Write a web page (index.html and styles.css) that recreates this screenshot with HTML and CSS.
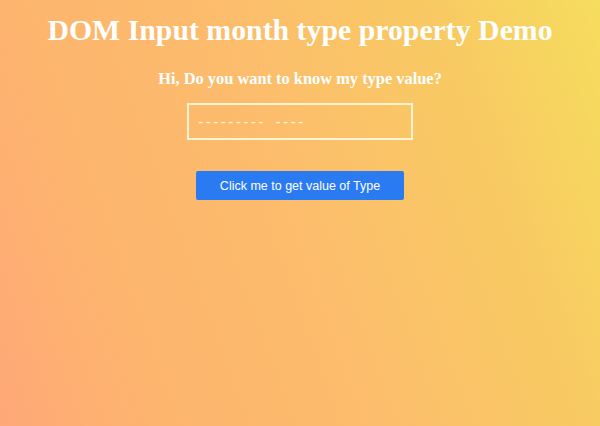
FILE: index.html
```html
<!DOCTYPE html>
<html>
<head>
<meta charset="utf-8">
<link rel="stylesheet" href="styles.css">
</head>
<body>
<main class="page">
  <h1 class="title">DOM Input month type property Demo</h1>
  <h3 class="subtitle">Hi, Do you want to know my type value?</h3>
  <input class="month" type="text" placeholder="--------- ----">
  <button class="btn" type="button">Click me to get value of Type</button>
</main>
</body>
</html>
```
FILE: styles.css
```css
html, body {
  margin: 0;
  height: 100%;
}
body {
  background: linear-gradient(70deg, #ffa878 0%, #fdb46e 20.5%, #fcbd6c 50%, #f8cb62 79.5%, #f6dd5e 100%);
  font-family: "Liberation Serif", "Times New Roman", serif;
  color: #fff;
}
.page {
  display: flex;
  flex-direction: column;
  align-items: center;
  padding-top: 13px;
}
.title {
  margin: 0;
  font-size: 29.8px;
  font-weight: bold;
  line-height: 34px;
}
.subtitle {
  margin: 22px 0 0;
  font-size: 16.4px;
  line-height: 19px;
}
.month {
  margin-top: 15px;
  box-sizing: border-box;
  width: 226px;
  height: 37px;
  background: transparent;
  border: 2px solid #fff3d6;
  color: #fff3d6;
  font-family: "Liberation Sans", Arial, sans-serif;
  font-size: 16px;
  letter-spacing: 2.2px;
  word-spacing: 3px;
  padding: 0 9px;
  outline: none;
}
.month::placeholder {
  color: #fff1cf;
  opacity: 1;
}
.btn {
  margin-top: 31px;
  width: 208px;
  height: 29px;
  background: #2a7af2;
  color: #fff;
  border: none;
  border-radius: 2px;
  font-family: "Liberation Sans", Arial, sans-serif;
  font-size: 12.5px;
  padding: 0;
}
```
